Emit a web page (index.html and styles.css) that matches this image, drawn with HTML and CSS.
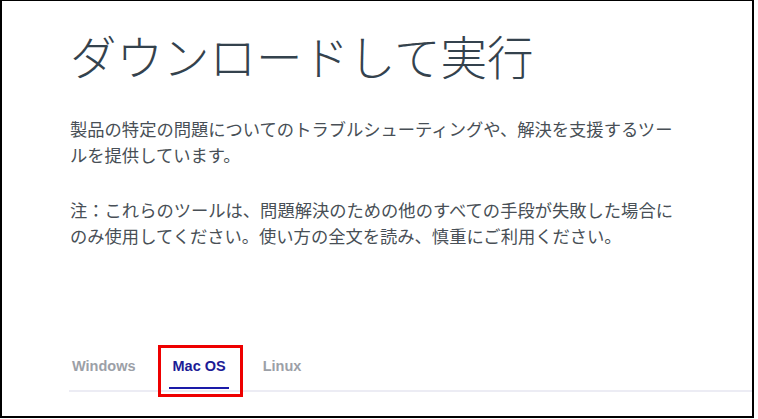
FILE: index.html
```html
<!DOCTYPE html>
<html lang="ja">
<head>
  <meta charset="UTF-8">
  <meta name="viewport" content="width=device-width, initial-scale=1.0">
  <title>ダウンロードして実行</title>
  <link rel="stylesheet" href="styles.css">
</head>
<body>
  <div class="frame">
    <div class="content">
      <h1 class="title">ダウンロードして実行</h1>
      <p class="desc">製品の特定の問題についてのトラブルシューティングや、解決を支援するツールを提供しています。</p>
      <p class="desc">注：これらのツールは、問題解決のための他のすべての手段が失敗した場合にのみ使用してください。使い方の全文を読み、慎重にご利用ください。</p>
    </div>
    <div class="tabs">
      <div class="tab-title">
        <span class="tab-item">Windows</span>
        <span class="tab-item active">Mac OS<span class="mark"></span></span>
        <span class="tab-item">Linux</span>
      </div>
    </div>
  </div>
</body>
</html>
```

FILE: styles.css
```css
html, body{
  margin: 0;
  padding: 0;
  background: #fff;
}
.frame{
  box-sizing: border-box;
  width: 754px;
  height: 418px;
  border: 2px solid #000;
  border-top-width: 1px;
  overflow: hidden;
}
.content{
  padding: 0 0 0 68px;
  font-family: "Noto Sans CJK JP", "Liberation Sans", sans-serif;
}
.title{
  margin: 26px 0 0;
  font-size: 46.5px;
  font-weight: 300;
  line-height: 55px;
  color: #34424d;
}
.desc{
  width: 612px;
  margin: 34px 0 0;
  font-size: 17.3px;
  line-height: 26px;
  color: #484f56;
}
.desc + .desc{
  margin-top: 29px;
}

.tabs{
  margin: 107px 0 0 66.5px;
  font-family: "Liberation Sans", Arial, sans-serif;
}
.tabs .tab-title{
  display: flex;
  gap: 30px;
  padding-bottom: 1px;
  border-bottom: 2px solid #ececf4;
  font-size: 14.5px;
  font-weight: 700;
  line-height: 20px;
}
.tabs .tab-item{
  position: relative;
  padding: 0 3.5px 11px;
  border-bottom: 2px solid transparent;
  color: #9ca0a7;
}
.tabs .tab-item.active{
  color: #1c1c96;
  border-bottom-color: #1a1aa8;
}
.tabs .mark{
  position: absolute;
  left: -11px;
  right: -13.5px;
  top: -11px;
  bottom: -10px;
  border: 3px solid #ee0000;
}
```
